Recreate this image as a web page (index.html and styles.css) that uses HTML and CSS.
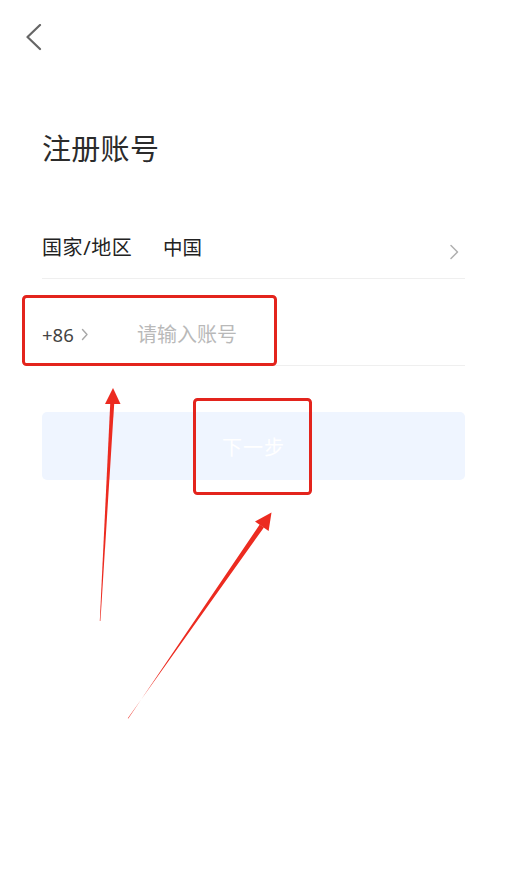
FILE: index.html
```html
<!DOCTYPE html>
<html lang="zh-CN">
<head>
<meta charset="utf-8">
<title>注册账号</title>
<link rel="stylesheet" href="styles.css">
</head>
<body>
<div class="page">
  <header class="topbar">
    <button class="back" aria-label="返回">
      <svg width="16" height="28" viewBox="0 0 16 28"><polyline points="14,1 1.5,13 14,25" fill="none" stroke="#666" stroke-width="2.2" stroke-linecap="round" stroke-linejoin="round"/></svg>
    </button>
  </header>
  <h1 class="title">注册账号</h1>
  <div class="form">
    <div class="row">
      <span class="label">国家/地区</span>
      <span class="value">中国</span>
      <svg class="chev" width="10" height="16" viewBox="0 0 10 16"><polyline points="2,1.5 8.5,8 2,14.5" fill="none" stroke="#b0b0b0" stroke-width="1.5" stroke-linecap="round" stroke-linejoin="round"/></svg>
    </div>
    <div class="row">
      <span class="code">+86<svg class="chev-sm" width="8" height="13" viewBox="0 0 8 13"><polyline points="1.5,1.5 6,6.5 1.5,11.5" fill="none" stroke="#a8a8a8" stroke-width="1.4" stroke-linecap="round" stroke-linejoin="round"/></svg></span>
      <span class="placeholder">请输入账号</span>
    </div>
  </div>
  <button class="next">下一步</button>

  <svg class="annot" width="511" height="896" viewBox="0 0 511 896">
    <rect x="23.5" y="296.5" width="252" height="68" rx="3" fill="none" stroke="#e3241d" stroke-width="3"/>
    <rect x="194.5" y="399.5" width="116" height="94" rx="3" fill="none" stroke="#e3241d" stroke-width="3"/>
    <polygon points="110.3,402 114.3,402 100.4,621 99.8,621" fill="#ec2b20"/>
    <polygon points="113,388 120.5,404 105,404" fill="#ec2b20"/>
    <polygon points="263.9,527.4 259.7,524.6 128.3,718.5 127.8,718.2" fill="#ec2b20"/>
    <polygon points="271.5,512.5 268.6,531 255,521.6" fill="#ec2b20"/>
  </svg>
</div>
</body>
</html>
```
FILE: styles.css
```css
* { box-sizing: border-box; }
html, body { margin: 0; padding: 0; background: #fff; }
body {
  font-family: "Noto Sans", "Noto Sans CJK SC", sans-serif;
  color: #222;
}
.page {
  position: relative;
  width: 511px;
  height: 896px;
  overflow: hidden;
}
.topbar {
  padding: 24px 0 0 26px;
  height: 52px;
}
.back {
  display: block;
  padding: 0;
  margin: 0;
  border: 0;
  background: none;
  width: 16px;
  height: 28px;
}
.back svg { display: block; }
.title {
  margin: 77px 0 0 42px;
  font-size: 29px;
  line-height: 40px;
  font-weight: 400;
  color: #2b2b2b;
  letter-spacing: 0.3px;
}
.form {
  margin: 23px 46px 0 42px;
}
.row {
  display: flex;
  align-items: center;
  height: 87px;
  padding-top: 25px;
  border-bottom: 1px solid #efefef;
}
.label {
  width: 121px;
  font-size: 20px;
  line-height: 24px;
  letter-spacing: 0.6px;
  color: #222;
}
.value {
  flex: 1;
  font-size: 19.5px;
  line-height: 24px;
  color: #222;
}
.chev { margin-right: 6px; margin-top: 8px; }
.code {
  display: flex;
  align-items: center;
  width: 95px;
  font-size: 18.5px;
  line-height: 24px;
  color: #444;
}
.chev-sm { margin-left: 7px; }
.placeholder {
  font-size: 20px;
  line-height: 24px;
  color: #b9b9b9;
}
.next {
  display: block;
  margin: 46px 0 0 42px;
  width: 423px;
  height: 68px;
  border: 0;
  border-radius: 5px;
  background: #eff5ff;
  color: #fff;
  font-family: "Noto Sans CJK SC", sans-serif;
  font-size: 20px;
  letter-spacing: 1px;
}
.annot {
  position: absolute;
  left: 0;
  top: 0;
  pointer-events: none;
}
```
